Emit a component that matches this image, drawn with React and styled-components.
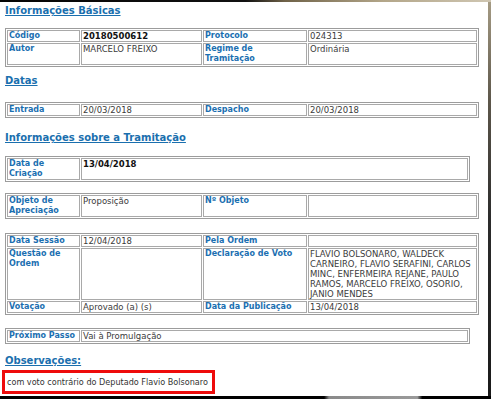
import React from "react";
import styled, { createGlobalStyle } from "styled-components";

const Global = createGlobalStyle`
  html, body { margin: 0; padding: 0; background: #fff; }
  body { font-family: "DejaVu Sans", Verdana, sans-serif; }
`;

const Frame = styled.div`
  width: 491px;
  height: 399px;
  display: flex;
  flex-direction: column;
  overflow: hidden;
  background: #fff;
`;

const TopEdge = styled.div`
  flex: none;
  height: 2px;
  background: linear-gradient(90deg, #050505 0%, #111 50%, #6f6248 58%, #b3a689 78%, #cfc6b2 100%);
`;

const Middle = styled.div`
  flex: 1;
  min-height: 0;
  display: flex;
`;

const Page = styled.main`
  flex: 1;
  padding-left: 5px;
`;

const RightEdge = styled.div`
  flex: none;
  width: 3px;
  background: linear-gradient(180deg, #a59b84 0%, #5d574b 25%, #2c2c2c 55%, #1a1a1a 100%);
`;

const BottomEdge = styled.div`
  flex: none;
  height: 3px;
  background: linear-gradient(90deg, #000 0%, #000 66%, #8a8a8a 67%, #9a9a9a 85%, #000 86%, #000 100%);
`;

const Heading = styled.h2`
  margin: ${(p) => p.$top}px 0 0;
  font-size: 10px;
  line-height: 14px;
  font-weight: bold;
  color: #1a6fae;
  text-decoration: underline;
`;

const Table = styled.table`
  margin-top: ${(p) => p.$top}px;
  width: ${(p) => p.$w}px;
  table-layout: fixed;
  border: 1px solid #9c9c9c;
  border-spacing: 1px;
  line-height: 10px;
`;

const Label = styled.td`
  border: 1px solid #a9a9a9;
  padding: 0 1px;
  vertical-align: top;
  font-size: 8px;
  font-weight: bold;
  color: #1b6fb1;
`;

const Value = styled.td`
  border: 1px solid #a9a9a9;
  padding: 0 1px;
  vertical-align: top;
  font-size: 8.5px;
  font-weight: ${(p) => (p.$strong ? "bold" : "normal")};
  color: ${(p) => (p.$strong ? "#111" : "#3b3b3b")};
`;

const NoteBox = styled.div`
  margin: 2px 0 0 -3px;
  width: 213px;
  height: 24px;
  box-sizing: border-box;
  border: 3px solid #ee0b0b;
  display: flex;
  align-items: center;
  padding-left: 2px;
  font-size: 8.1px;
  white-space: nowrap;
  color: #333;
`;

const Cols4 = () => (
  <colgroup>
    <col style={{ width: 73 }} />
    <col style={{ width: 121 }} />
    <col style={{ width: 104 }} />
    <col />
  </colgroup>
);

const Cols2 = () => (
  <colgroup>
    <col style={{ width: 73 }} />
    <col />
  </colgroup>
);

export default function App() {
  return (
    <>
      <Global />
      <Frame>
        <TopEdge />
        <Middle>
          <Page>
            <Heading $top={2}>Informações Básicas</Heading>
            <Table $top={10} $w={474}>
              <Cols4 />
              <tbody>
                <tr>
                  <Label>Código</Label>
                  <Value $strong>20180500612</Value>
                  <Label>Protocolo</Label>
                  <Value>024313</Value>
                </tr>
                <tr>
                  <Label>Autor</Label>
                  <Value>MARCELO FREIXO</Value>
                  <Label>Regime de Tramitação</Label>
                  <Value>Ordinária</Value>
                </tr>
              </tbody>
            </Table>

            <Heading $top={7}>Datas</Heading>
            <Table $top={14} $w={474}>
              <Cols4 />
              <tbody>
                <tr>
                  <Label>Entrada</Label>
                  <Value>20/03/2018</Value>
                  <Label>Despacho</Label>
                  <Value>20/03/2018</Value>
                </tr>
              </tbody>
            </Table>

            <Heading $top={13}>Informações sobre a Tramitação</Heading>
            <Table $top={11} $w={465}>
              <Cols2 />
              <tbody>
                <tr>
                  <Label>Data de Criação</Label>
                  <Value $strong>13/04/2018</Value>
                </tr>
              </tbody>
            </Table>

            <Table $top={11} $w={474}>
              <Cols4 />
              <tbody>
                <tr>
                  <Label>Objeto de Apreciação</Label>
                  <Value>Proposição</Value>
                  <Label>Nº Objeto</Label>
                  <Value></Value>
                </tr>
              </tbody>
            </Table>

            <Table $top={14} $w={474}>
              <Cols4 />
              <tbody>
                <tr>
                  <Label>Data Sessão</Label>
                  <Value>12/04/2018</Value>
                  <Label>Pela Ordem</Label>
                  <Value></Value>
                </tr>
                <tr>
                  <Label>Questão de Ordem</Label>
                  <Value></Value>
                  <Label>Declaração de Voto</Label>
                  <Value>
                    FLAVIO BOLSONARO, WALDECK CARNEIRO, FLAVIO SERAFINI, CARLOS MINC, ENFERMEIRA
                    REJANE, PAULO RAMOS, MARCELO FREIXO, OSORIO, JANIO MENDES
                  </Value>
                </tr>
                <tr>
                  <Label>Votação</Label>
                  <Value>Aprovado (a) (s)</Value>
                  <Label>Data da Publicação</Label>
                  <Value>13/04/2018</Value>
                </tr>
              </tbody>
            </Table>

            <Table $top={13} $w={465}>
              <Cols2 />
              <tbody>
                <tr>
                  <Label>Próximo Passo</Label>
                  <Value>Vai à Promulgação</Value>
                </tr>
              </tbody>
            </Table>

            <Heading $top={10}>Observações:</Heading>
            <NoteBox>com voto contrário do Deputado Flavio Bolsonaro</NoteBox>
          </Page>
          <RightEdge />
        </Middle>
        <BottomEdge />
      </Frame>
    </>
  );
}
